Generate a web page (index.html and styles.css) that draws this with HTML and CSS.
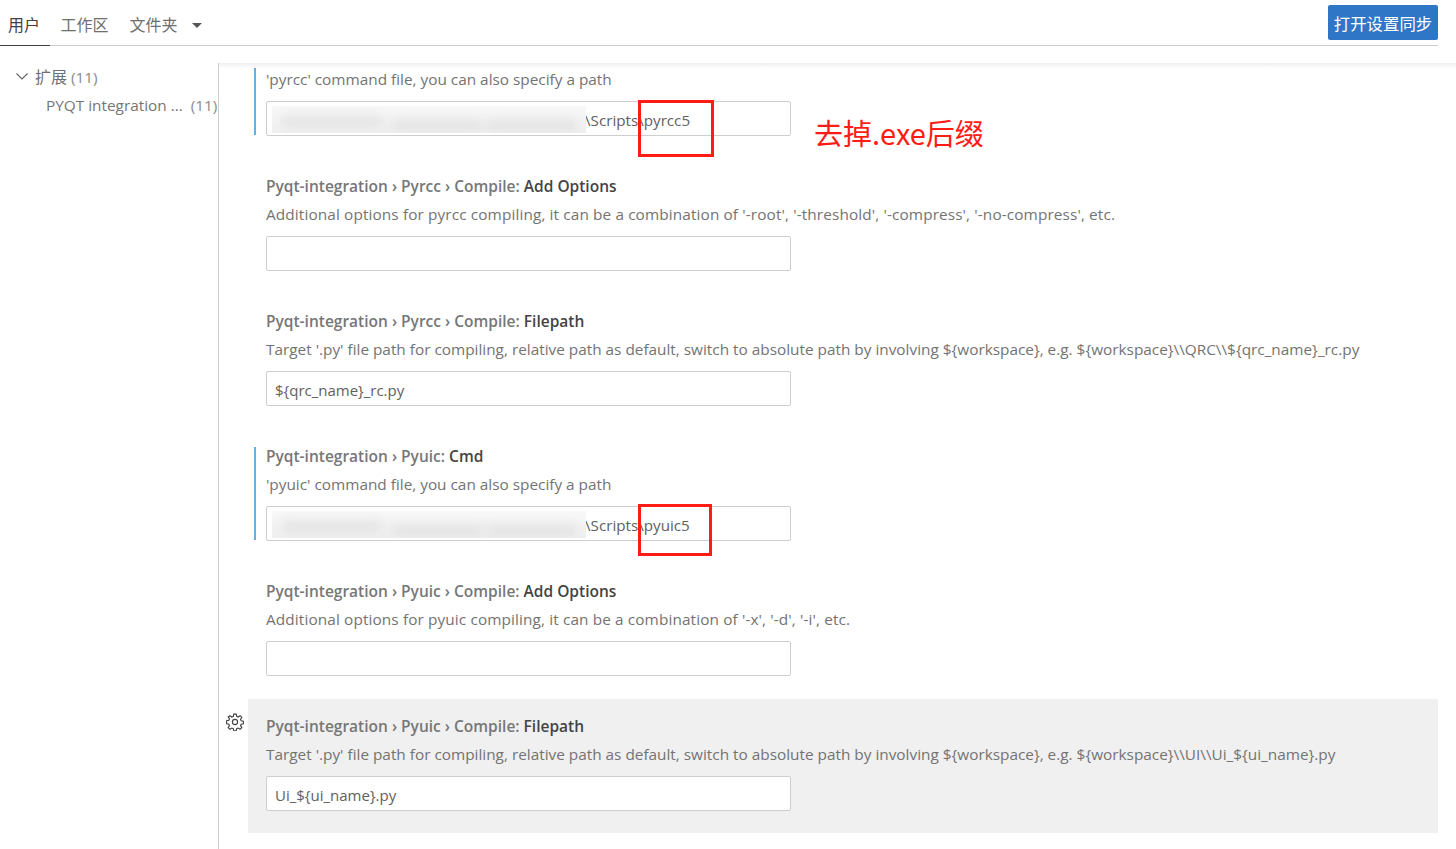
FILE: index.html
```html
<!DOCTYPE html>
<html lang="zh">
<head>
  <meta charset="UTF-8" />
  <title>设置</title>
  <link rel="stylesheet" href="styles.css">
</head>
<body>
  <header class="tabs">
    <nav class="tab-list">
      <a class="tab active">用户</a>
      <a class="tab">工作区</a>
      <a class="tab">文件夹<span class="caret"></span></a>
    </nav>
    <button class="sync-btn">打开设置同步</button>
  </header>

  <main class="body-wrap">
    <aside class="tree">
      <div class="tree-row">
        <svg class="chevron" width="16" height="16" viewBox="0 0 16 16"><path d="M2.500 5.500 8 11l5.500-5.500" fill="none" stroke="#616161" stroke-width="1.100"/></svg>
        <span><span class="tree-cjk">扩展</span> <span class="count">(11)</span></span>
      </div>
      <div class="tree-row sub">
        <span>PYQT integration ...</span>
        <span class="count">(11)</span>
      </div>
    </aside>

    <section class="settings">
      <article class="row modified cut">
        <p>'pyrcc' command file, you can also specify a path</p>
        <div class="input path"><span class="blurred"><i></i><i></i><i></i></span><span class="tail">\Scripts\pyrcc5</span></div>
      </article>

      <article class="row">
        <h3><span class="crumb">Pyqt-integration › Pyrcc › Compile: </span>Add Options</h3>
        <p class="wide">Additional options for pyrcc compiling, it can be a combination of '-root', '-threshold', '-compress', '-no-compress', etc.</p>
        <div class="input"></div>
      </article>

      <article class="row">
        <h3><span class="crumb">Pyqt-integration › Pyrcc › Compile: </span>Filepath</h3>
        <p>Target '.py' file path for compiling, relative path as default, switch to absolute path by involving ${workspace}, e.g. ${workspace}\\QRC\\${qrc_name}_rc.py</p>
        <div class="input">${qrc_name}_rc.py</div>
      </article>

      <article class="row modified">
        <h3><span class="crumb">Pyqt-integration › Pyuic: </span>Cmd</h3>
        <p>'pyuic' command file, you can also specify a path</p>
        <div class="input path"><span class="blurred"><i></i><i></i><i></i></span><span class="tail">\Scripts\pyuic5</span></div>
      </article>

      <article class="row">
        <h3><span class="crumb">Pyqt-integration › Pyuic › Compile: </span>Add Options</h3>
        <p class="wide">Additional options for pyuic compiling, it can be a combination of '-x', '-d', '-i', etc.</p>
        <div class="input"></div>
      </article>

      <article class="row hovered">
        <svg class="gear" width="18" height="18" viewBox="0 0 16 16"><path d="M6.900 1h2.200l.4 2 1.300.55 1.700-1.150 1.550 1.550-1.150 1.700.55 1.300 2 .4v2.200l-2 .4-.55 1.300 1.150 1.700-1.550 1.550-1.700-1.150-1.300.55-.4 2H6.900l-.4-2-1.300-.55-1.700 1.150-1.550-1.550 1.150-1.700-.55-1.300-2-.4V6.900l2-.4.55-1.300-1.150-1.700L3.500 2.400l1.700 1.150 1.300-.55z" fill="none" stroke="#424242" stroke-width="1"/><circle cx="8" cy="8" r="2.300" fill="none" stroke="#424242" stroke-width="1"/></svg>
        <h3><span class="crumb">Pyqt-integration › Pyuic › Compile: </span>Filepath</h3>
        <p>Target '.py' file path for compiling, relative path as default, switch to absolute path by involving ${workspace}, e.g. ${workspace}\\UI\\Ui_${ui_name}.py</p>
        <div class="input">Ui_${ui_name}.py</div>
      </article>
    </section>
  </main>

  <!-- anotaciones rojas encima de la captura -->
  <div class="mark mark-rcc"></div>
  <div class="mark mark-uic"></div>
  <div class="note">去掉.exe后缀</div>
</body>
</html>
```

FILE: styles.css
```css
:root {
  --text: #616161;
  --text-strong: #444;
  --border: #cecece;
  --blue: #2f76c7;
  --modified: #66afe0;
  --red: #ff1c14;
}

* {
  box-sizing: border-box;
}

html, body {
  height: 100%;
}

body {
  margin: 0;
  height: 849px;
  overflow: hidden;
  background: #fff;
  color: var(--text);
  font-family: "Open Sans", "Noto Sans CJK SC", sans-serif;
  font-size: 15.350px;
  position: relative;
}

/* Cabecera */
.tabs {
  width: 1438px;
  height: 46px;
  display: flex;
  justify-content: space-between;
  align-items: flex-start;
  border-bottom: 1px solid var(--border);
}

.tab-list {
  display: flex;
  height: 46px;
}

.tab {
  height: 46px;
  padding: 15px 10.500px 0;
  line-height: 20px;
  font-size: 16px;
  color: #6f6f6f;
  display: flex;
  align-items: flex-start;
  white-space: nowrap;
}

.tab.active {
  width: 50px;
  padding: 15px 0 0 8px;
  color: #424242;
  border-bottom: 1px solid #424242;
}

.caret {
  width: 0;
  height: 0;
  margin: 8px 0 0 14px;
  border-left: 5.500px solid transparent;
  border-right: 5.500px solid transparent;
  border-top: 5.500px solid #555;
}

.sync-btn {
  width: 110px;
  height: 35px;
  margin-top: 5px;
  padding: 0;
  border: none;
  border-radius: 2px;
  background: var(--blue);
  color: #fff;
  font-family: inherit;
  font-size: 16.400px;
}

/* Cuerpo */
.body-wrap {
  display: flex;
  height: 803px;
  padding-top: 17px;
}

.tree {
  width: 219px;
  flex: none;
  border-right: 1px solid var(--border);
}

.tree-row {
  height: 28px;
  display: flex;
  align-items: center;
  gap: 5px;
  padding-left: 14px;
  color: #6f6f6f;
  white-space: nowrap;
}

.tree-row:first-child {
  padding-bottom: 2px;
}

.tree-row.sub {
  gap: 8px;
  padding-left: 46px;
  color: #757575;
}

.tree-cjk {
  font-size: 16px;
}

.count {
  color: #8a8a8a;
}

.settings {
  flex: 1;
  overflow: hidden;
  position: relative;
  padding: 0 18px 0 29px;
}

.settings::before {
  content: "";
  position: absolute;
  left: 0;
  right: 0;
  top: 0;
  height: 5px;
  background: linear-gradient(#eee, #fff);
  z-index: 1;
}

.row {
  height: 135px;
  padding: 17px 0 0 18px;
  position: relative;
}

/* primera fila, cortada por el scroll */
.row.cut {
  height: 96px;
  padding-top: 6px;
}

.row.cut p {
  margin-top: 0;
}

.row.hovered {
  height: 134px;
  background: #f0f0f0;
}

.row.modified::before {
  content: "";
  position: absolute;
  left: 6px;
  top: 18px;
  bottom: 24px;
  width: 2px;
  background: var(--modified);
}

.row.cut::before {
  top: 0;
}

h3 {
  margin: 0;
  font-size: 15.500px;
  line-height: 20px;
  font-weight: 600;
  color: var(--text-strong);
}

.crumb {
  color: #777;
}

.row p {
  margin: 8px 0 0;
  line-height: 20px;
  white-space: nowrap;
  color: #737373;
}

.row p.wide {
  letter-spacing: 0.120px;
}

.input {
  width: 525px;
  height: 35px;
  margin-top: 12px;
  padding: 0 8px;
  font-size: 15px;
  line-height: 36px;
  background: #fff;
  border: 1px solid var(--border);
  border-radius: 2px;
  color: #616161;
}

.input.path {
  display: flex;
  padding: 0;
}

/* ruta difuminada de la captura */
.blurred {
  width: 314px;
  height: 27px;
  margin: 4px 0 0 5px;
  flex: none;
  overflow: hidden;
  position: relative;
  background: linear-gradient(#f8f8f8, #f0f0f0);
}

.blurred i {
  position: absolute;
  height: 9px;
  background: #dedede;
  filter: blur(6px);
}

.blurred i:nth-child(1) {
  left: 10px;
  top: 11px;
  width: 100px;
}

.blurred i:nth-child(2) {
  left: 120px;
  top: 15px;
  width: 90px;
}

.blurred i:nth-child(3) {
  left: 215px;
  top: 15px;
  width: 90px;
}

.tail {
  margin-left: -1px;
  font-size: 15.200px;
  white-space: nowrap;
}

.gear {
  position: absolute;
  left: -22px;
  top: 14px;
}

/* Anotaciones */
.mark {
  position: absolute;
  border: 3px solid var(--red);
}

.mark-rcc {
  left: 638px;
  top: 100px;
  width: 76px;
  height: 57px;
}

.mark-uic {
  left: 638px;
  top: 504px;
  width: 74px;
  height: 52px;
}

.note {
  position: absolute;
  left: 814px;
  top: 113px;
  font-size: 29px;
  line-height: 38px;
  color: var(--red);
  font-family: "Noto Sans CJK SC", sans-serif;
}
```
